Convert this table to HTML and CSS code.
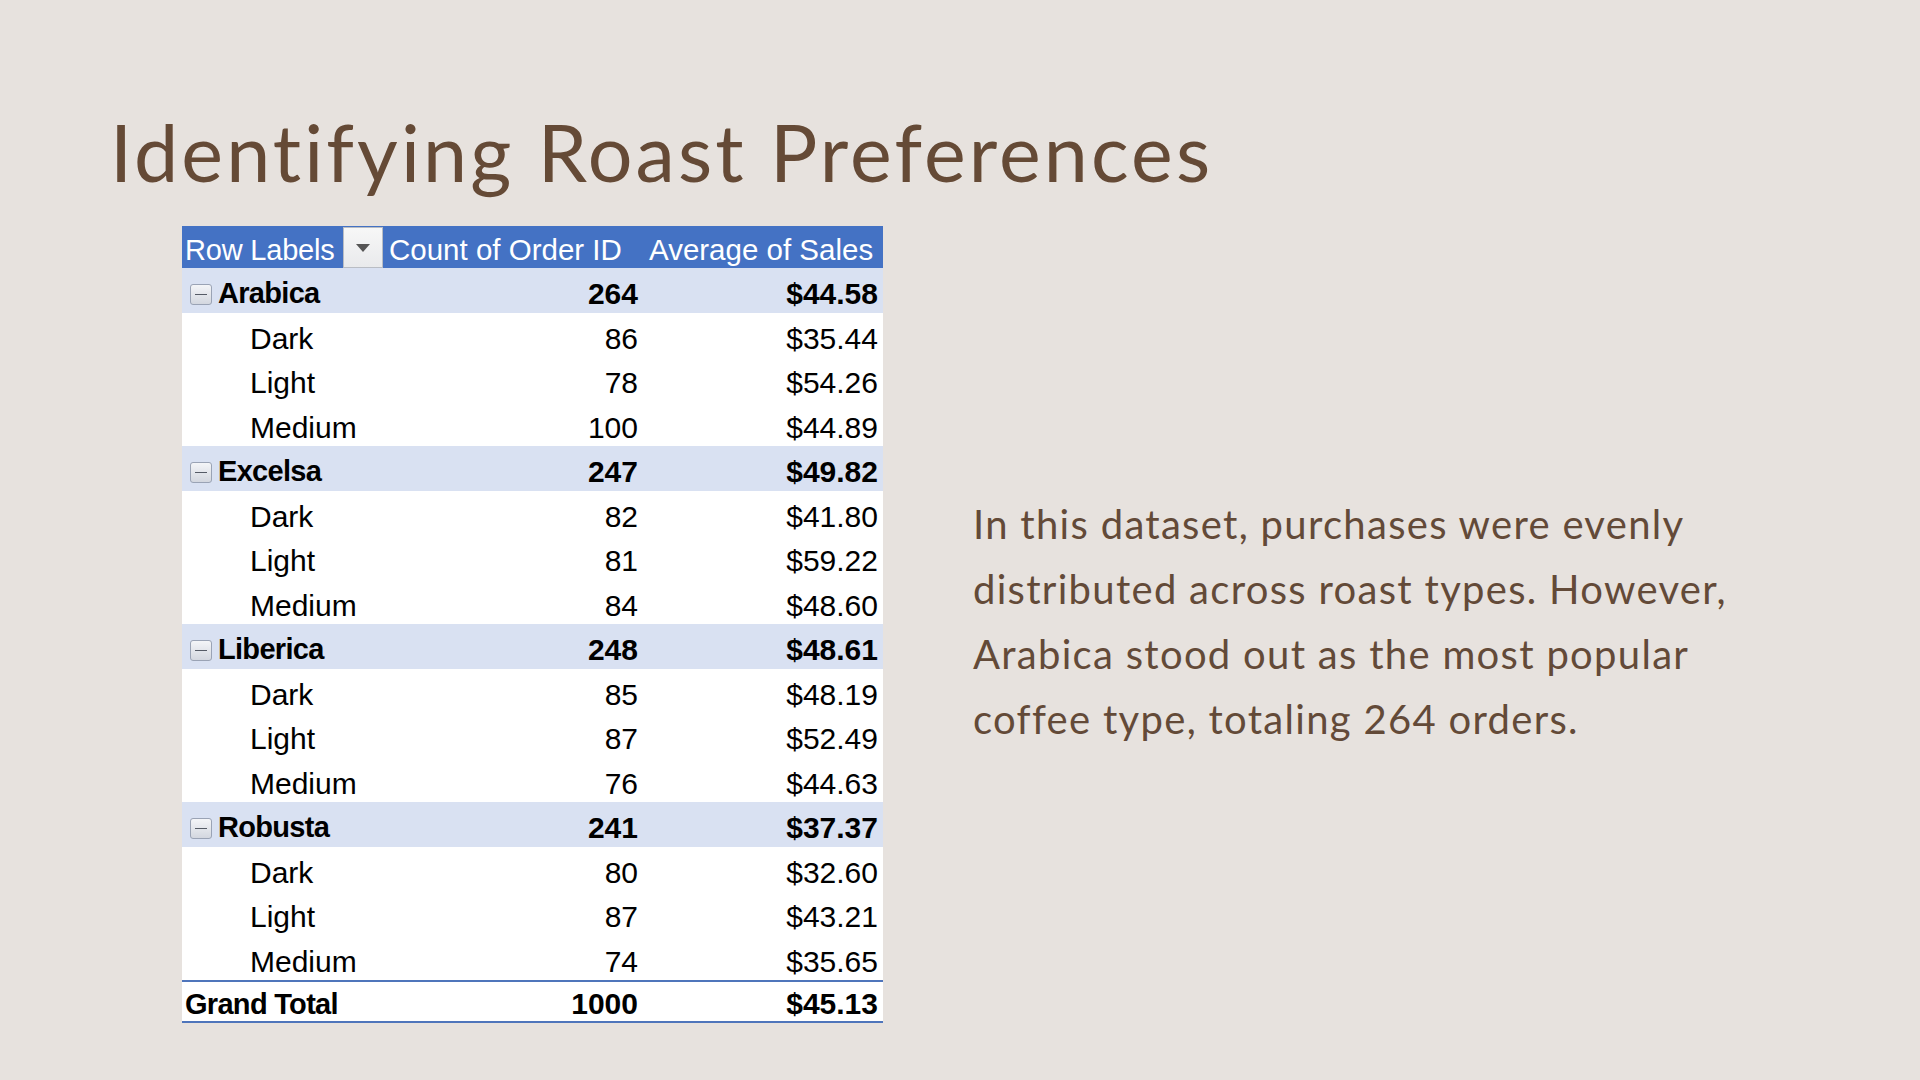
FILE: index.html
```html
<!DOCTYPE html>
<html lang="en">
<head>
<meta charset="utf-8">
<title>Identifying Roast Preferences</title>
<link rel="stylesheet" href="styles.css">
</head>
<body>
<main class="slide">
  <h1 class="title">Identifying Roast Preferences</h1>
  <div class="content">
    <table class="pivot">
      <colgroup>
        <col class="c-label"><col class="c-count"><col class="c-avg">
      </colgroup>
      <thead>
        <tr>
          <th class="h-label"><div class="h-label-inner"><span class="h-text">Row Labels</span><span class="dd"><svg width="14" height="8" viewBox="0 0 14 8"><path d="M0 0h14L7 8z" fill="#555"/></svg></span></div></th>
          <th>Count of Order ID</th>
          <th>Average of Sales</th>
        </tr>
      </thead>
      <tbody>
        <tr class="grp"><td><span class="tog"></span>Arabica</td><td class="num">264</td><td class="num">$44.58</td></tr>
        <tr class="sub"><td>Dark</td><td class="num">86</td><td class="num">$35.44</td></tr>
        <tr class="sub"><td>Light</td><td class="num">78</td><td class="num">$54.26</td></tr>
        <tr class="sub"><td>Medium</td><td class="num">100</td><td class="num">$44.89</td></tr>
        <tr class="grp"><td><span class="tog"></span>Excelsa</td><td class="num">247</td><td class="num">$49.82</td></tr>
        <tr class="sub"><td>Dark</td><td class="num">82</td><td class="num">$41.80</td></tr>
        <tr class="sub"><td>Light</td><td class="num">81</td><td class="num">$59.22</td></tr>
        <tr class="sub"><td>Medium</td><td class="num">84</td><td class="num">$48.60</td></tr>
        <tr class="grp"><td><span class="tog"></span>Liberica</td><td class="num">248</td><td class="num">$48.61</td></tr>
        <tr class="sub"><td>Dark</td><td class="num">85</td><td class="num">$48.19</td></tr>
        <tr class="sub"><td>Light</td><td class="num">87</td><td class="num">$52.49</td></tr>
        <tr class="sub"><td>Medium</td><td class="num">76</td><td class="num">$44.63</td></tr>
        <tr class="grp"><td><span class="tog"></span>Robusta</td><td class="num">241</td><td class="num">$37.37</td></tr>
        <tr class="sub"><td>Dark</td><td class="num">80</td><td class="num">$32.60</td></tr>
        <tr class="sub"><td>Light</td><td class="num">87</td><td class="num">$43.21</td></tr>
        <tr class="sub"><td>Medium</td><td class="num">74</td><td class="num">$35.65</td></tr>
      </tbody>
      <tfoot>
        <tr class="total"><td>Grand Total</td><td class="num">1000</td><td class="num">$45.13</td></tr>
      </tfoot>
    </table>
    <p class="note">In this dataset, purchases were evenly distributed across roast types. However, Arabica stood out as the most popular coffee type, totaling 264 orders.</p>
  </div>
</main>
</body>
</html>
```

FILE: styles.css
```css
html, body {
  margin: 0;
  padding: 0;
}
body {
  background: #e7e2de;
  width: 1920px;
  height: 1080px;
  overflow: hidden;
}
.slide {
  padding: 104px 0 0 110px;
}
.title {
  margin: 0;
  font-family: Lato, "Open Sans", sans-serif;
  font-weight: 400;
  font-size: 79px;
  line-height: 95px;
  color: #654a36;
  letter-spacing: 3.1px;
}
.content {
  display: flex;
  align-items: flex-start;
  margin-top: 27px;
  padding-left: 72px;
}
.pivot {
  border-collapse: collapse;
  width: 701px;
  font-family: "Liberation Sans", Arial, sans-serif;
  font-size: 30px;
  color: #000;
  table-layout: fixed;
}
.c-label { width: 201px; }
.c-count { width: 260px; }
.c-avg { width: 240px; }
.pivot th {
  background: #4472c4;
  color: #fff;
  font-weight: 400;
  font-size: 29.5px;
  text-align: left;
  padding: 6px 0 0 6px;
  line-height: 36px;
  white-space: nowrap;
}
.pivot th.h-label {
  padding: 0 0 0 3px;
}
.h-label-inner {
  display: flex;
  align-items: center;
  justify-content: space-between;
  height: 42px;
}
.h-text {
  padding-top: 6px;
  font-size: 29px;
  letter-spacing: -0.2px;
}
.dd {
  width: 38px;
  height: 39px;
  margin-top: 1px;
  border: 1px solid #b9bdc4;
  background: linear-gradient(#f7f7f7, #e9eaec);
  display: flex;
  align-items: center;
  justify-content: center;
}
.pivot td {
  padding: 7px 0 0;
  line-height: 37.5px;
  white-space: nowrap;
}
.pivot td.num {
  text-align: right;
  padding-right: 5px;
}
.grp td {
  background: #d9e1f2;
  font-weight: 700;
}
.grp td:first-child {
  padding-left: 8px;
  font-size: 29px;
  letter-spacing: -0.7px;
}
.tog {
  display: inline-block;
  width: 22px;
  height: 21px;
  margin-right: 6px;
  vertical-align: -2px;
  border: 1px solid #9aa3b5;
  border-radius: 3px;
  background: linear-gradient(#f4f5f8, #d3d7df);
  position: relative;
  box-sizing: border-box;
}
.tog::after {
  content: "";
  position: absolute;
  left: 4px;
  right: 4px;
  top: 9px;
  height: 1px;
  background: #555b66;
}
.sub td {
  background: #ffffff;
}
.sub td:first-child {
  padding-left: 68px;
}
.total td {
  background: #ffffff;
  font-weight: 700;
  border-top: 2px solid #4f75bb;
  border-bottom: 2px solid #4f75bb;
  padding-top: 5px;
  line-height: 34px;
}
.total td:first-child {
  padding-left: 3px;
  font-size: 29px;
  letter-spacing: -0.7px;
}
.note {
  margin: 266px 0 0 90px;
  width: 800px;
  font-family: Lato, "Open Sans", sans-serif;
  font-size: 40px;
  line-height: 65px;
  letter-spacing: 1.3px;
  color: #634a38;
}
```
